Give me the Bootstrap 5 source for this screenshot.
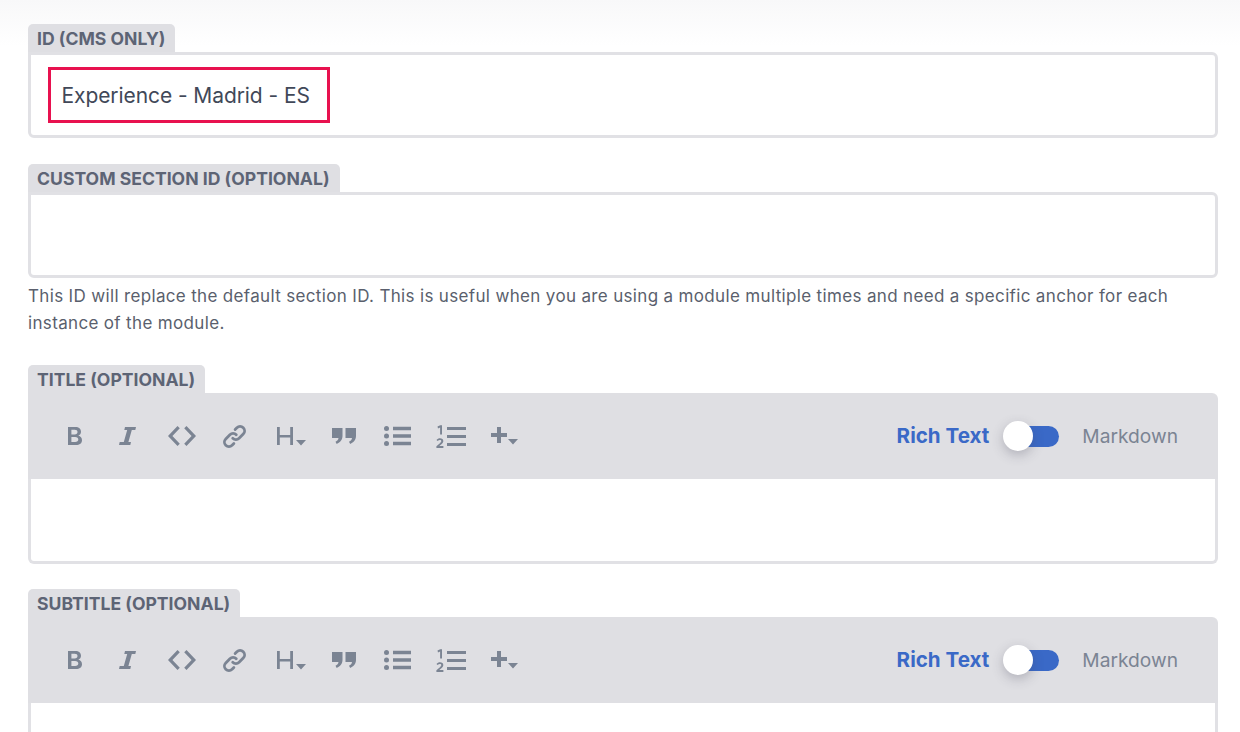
<!DOCTYPE html>
<html lang="en">
<head>
<meta charset="utf-8">
<title>Editor</title>
<link rel="stylesheet" href="https://cdn.jsdelivr.net/npm/bootstrap@5.3.0/dist/css/bootstrap.min.css">
<style>
html,body{height:732px;overflow:hidden;}
body{font-family:"Inter","Liberation Sans",sans-serif;color:#4a5060;background:linear-gradient(#f8f8f9 0,#fff 46px) no-repeat;background-size:100% 46px;background-color:#fff;}
.pg{width:1190px;margin-left:28px;padding-top:24px;}
.fld{margin-bottom:26px;}
.fld-title{margin-bottom:25px;}
.tab{height:28px;background:#dfdfe3;color:#5d6475;font-size:17.6px;font-weight:700;line-height:29.5px;padding:0 10px 0 9px;border-radius:5px 5px 0 0;white-space:nowrap;margin:0;}
.boxy{height:86px;border:3px solid #e1e1e5;border-radius:0 6px 6px 6px;background:#fff;padding:12px 17px;}
.val{border:3px solid #e8114f;height:56px;width:282px;padding-left:10.500px;font-size:21px;line-height:51.500px;color:#414858;white-space:nowrap;letter-spacing:-.08px;}
.hint{font-size:17px;letter-spacing:.34px;line-height:27px;color:#5a5f6d;margin-top:5px;margin-bottom:28px;}
.tb{height:86px;background:#dfdfe3;border-radius:0 6px 0 0;padding:0 40px 0 39px;}
.ic{display:block;fill:#7b8493;flex:none;}
.m36{margin-left:36px;}.m32{margin-left:32px;}.m26{margin-left:26px;}.m29{margin-left:29px;}.m28{margin-left:28px;}.m25{margin-left:25px;}
.rt{font-size:20.6px;font-weight:700;color:#3a69c7;}
.md{font-size:19.2px;color:#7b8493;}
.sw{width:56px;height:30px;margin:0 23px 0 14px;flex:none;}
.sw-track{width:44px;height:21px;right:0;top:5px;background:#3a69c7;border-radius:11px;}
.sw-knob{width:30px;height:30px;left:0;top:0;background:#fff;border-radius:50%;box-shadow:0 4px 12px rgba(70,70,90,.3);}
.ed{height:85px;border:3px solid #e1e1e5;border-top:0;border-radius:0 0 6px 6px;background:#fff;}
</style>
</head>
<body>
<svg width="0" height="0" class="position-absolute">
<defs>
<symbol id="i-b" viewBox="0 0 16 20"><path d="M1 1h7.400c3.500 0 5.600 1.800 5.600 4.700 0 1.900-1 3.300-2.700 3.900 2.300.6 3.700 2.300 3.700 4.600 0 3.100-2.400 4.800-6 4.800H1zm3.400 2.800v4.600h3.300c1.800 0 2.800-.8 2.800-2.300s-1-2.300-2.800-2.300zm0 7.300v5h3.700c2.100 0 3.200-.9 3.200-2.500s-1.100-2.500-3.200-2.500z"/></symbol>
<symbol id="i-i" viewBox="0 0 17 18"><path d="M6 0h11l-.7 3H12.800L9.400 15H12l-.7 3H0l.7-3h4.100L8.200 3H5.300z"/></symbol>
<symbol id="i-c" viewBox="0 0 28 22"><path d="M9.500 1 0 11l9.500 10 2.300-2.200L4.400 11l7.400-7.800zM18.500 1 28 11l-9.500 10-2.300-2.200 7.400-7.800-7.400-7.800z"/></symbol>
<symbol id="i-l" viewBox="0 0 24 24"><path fill="none" stroke="#7b8493" stroke-width="2.700" stroke-linecap="round" d="M10.300 13.700a4.300 4.300 0 0 0 6.100 0l4-4a4.300 4.300 0 0 0-6.100-6.100l-1.700 1.700M13.700 10.300a4.300 4.300 0 0 0-6.100 0l-4 4a4.300 4.300 0 0 0 6.100 6.100l1.700-1.700"/></symbol>
<symbol id="i-h" viewBox="0 0 30 20"><path d="M1 1h2.800v8h10.400V1H17v18h-2.800v-7.600H3.800V19H1zM20 14h10l-5 5.500z"/></symbol>
<symbol id="i-q" viewBox="0 0 24 16"><path d="M0 0h10.500v8c0 3.500-2.200 6.500-5.800 8l-1.200-2.300c1.800-.8 2.800-1.900 3-3.700H0zM13.500 0H24v8c0 3.500-2.200 6.500-5.800 8L17 13.700c1.800-.8 2.800-1.900 3-3.700h-6.500z"/></symbol>
<symbol id="i-u" viewBox="0 0 27 20"><circle cx="2.500" cy="2.500" r="2.500"/><circle cx="2.500" cy="10" r="2.500"/><circle cx="2.500" cy="17.500" r="2.500"/><path d="M9 .8h18v3.400H9zM9 8.300h18v3.400H9zM9 15.800h18v3.400H9z"/></symbol>
<symbol id="i-o" viewBox="0 0 30 23"><path d="M1.500 1.600 4.200.2H6v9.300H4.100V2.600l-2.100.9zM11 2h19v3H11zM11 10h19v3H11zM11 18h19v3H11zM.4 23v-1.700l3.800-3.400c.8-.7 1.100-1.200 1.100-1.800 0-.7-.5-1.200-1.400-1.200-.8 0-1.600.4-2.300 1.200l-1.100-1.200c1-1.100 2.100-1.600 3.500-1.600 2 0 3.300 1.100 3.300 2.700 0 1.100-.5 1.900-1.600 2.900l-2.400 2.200h4.100V23z"/></symbol>
<symbol id="i-p" viewBox="0 0 27 18"><path d="M6 0h4v6h6v4h-6v6H6v-6H0V6h6zM17 12h10l-5 5.500z"/></symbol>
</defs>
</svg>

<main class="pg">
  <section class="fld">
    <div class="d-flex"><label class="tab">ID (CMS ONLY)</label></div>
    <div class="boxy"><div class="val">Experience - Madrid - ES</div></div>
  </section>
  <section>
    <div class="d-flex"><label class="tab">CUSTOM SECTION ID (OPTIONAL)</label></div>
    <div class="boxy"></div>
    <p class="hint">This ID will replace the default section ID. This is useful when you are using a module multiple times and need a specific anchor for each instance of the module.</p>
  </section>
  <section class="fld-title">
    <div class="d-flex"><label class="tab">TITLE (OPTIONAL)</label></div>
    <div class="tb d-flex align-items-center justify-content-between">
      <div class="d-flex align-items-center">
        <svg class="ic" width="16" height="20"><use href="#i-b"/></svg>
        <svg class="ic m36" width="17" height="18"><use href="#i-i"/></svg>
        <svg class="ic m32" width="28" height="22"><use href="#i-c"/></svg>
        <svg class="ic m26" width="25" height="25"><use href="#i-l"/></svg>
        <svg class="ic m29" width="30" height="20"><use href="#i-h"/></svg>
        <svg class="ic m26" width="24" height="16"><use href="#i-q"/></svg>
        <svg class="ic m28" width="27" height="20"><use href="#i-u"/></svg>
        <svg class="ic m25" width="30" height="23"><use href="#i-o"/></svg>
        <svg class="ic m25" width="27" height="18"><use href="#i-p"/></svg>
      </div>
      <div class="d-flex align-items-center">
        <span class="rt">Rich Text</span>
        <span class="sw position-relative d-block"><span class="sw-track position-absolute"></span><span class="sw-knob position-absolute"></span></span>
        <span class="md">Markdown</span>
      </div>
    </div>
    <div class="ed"></div>
  </section>
  <section>
    <div class="d-flex"><label class="tab">SUBTITLE (OPTIONAL)</label></div>
    <div class="tb d-flex align-items-center justify-content-between">
      <div class="d-flex align-items-center">
        <svg class="ic" width="16" height="20"><use href="#i-b"/></svg>
        <svg class="ic m36" width="17" height="18"><use href="#i-i"/></svg>
        <svg class="ic m32" width="28" height="22"><use href="#i-c"/></svg>
        <svg class="ic m26" width="25" height="25"><use href="#i-l"/></svg>
        <svg class="ic m29" width="30" height="20"><use href="#i-h"/></svg>
        <svg class="ic m26" width="24" height="16"><use href="#i-q"/></svg>
        <svg class="ic m28" width="27" height="20"><use href="#i-u"/></svg>
        <svg class="ic m25" width="30" height="23"><use href="#i-o"/></svg>
        <svg class="ic m25" width="27" height="18"><use href="#i-p"/></svg>
      </div>
      <div class="d-flex align-items-center">
        <span class="rt">Rich Text</span>
        <span class="sw position-relative d-block"><span class="sw-track position-absolute"></span><span class="sw-knob position-absolute"></span></span>
        <span class="md">Markdown</span>
      </div>
    </div>
    <div class="ed"></div>
  </section>
</main>
<script src="https://cdn.jsdelivr.net/npm/bootstrap@5.3.0/dist/js/bootstrap.bundle.min.js"></script>
</body>
</html>
